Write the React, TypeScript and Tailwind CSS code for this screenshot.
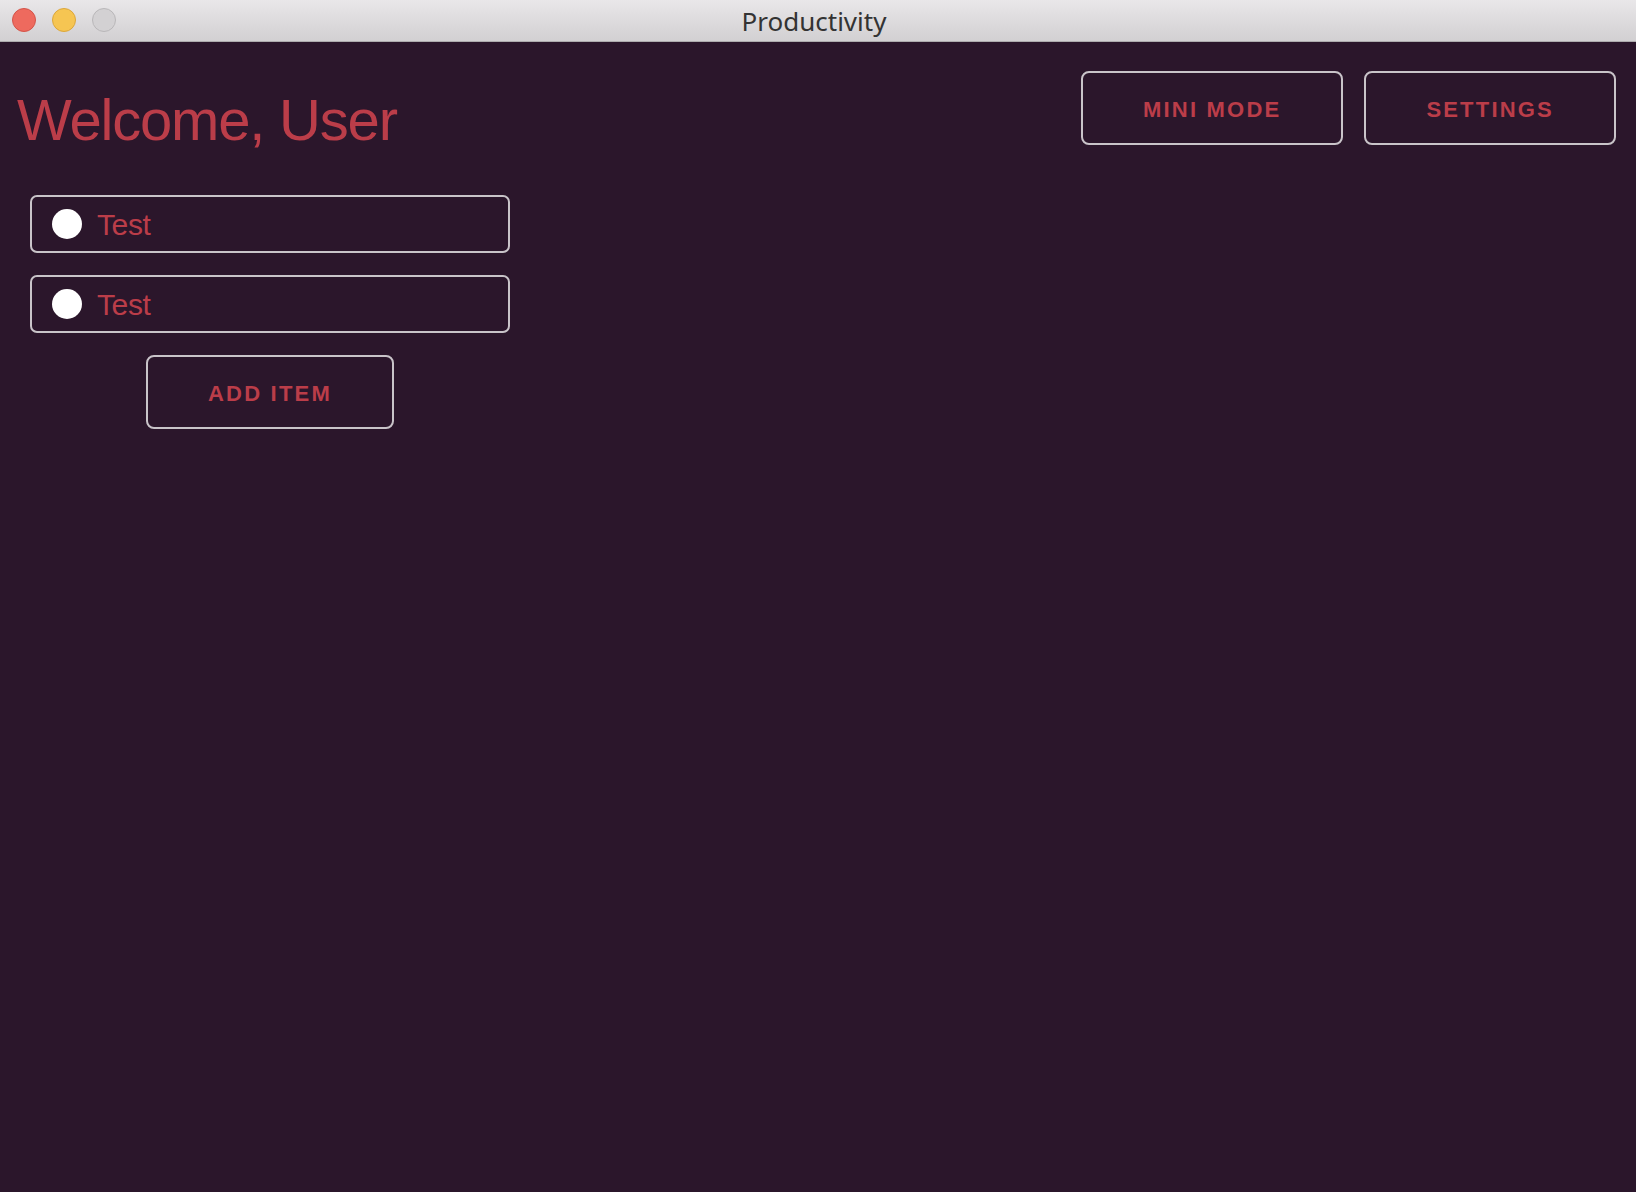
import React from "react";

function OutlineButton({ label }: { label: string }) {
  return (
    <button className="h-[74px] px-[60px] pt-[3px] rounded-[8px] border-2 border-[#c9c4c9] bg-transparent text-[#bb3d49] text-[22px] font-bold tracking-[2.2px] leading-none font-['Liberation_Sans',Arial,sans-serif] whitespace-nowrap">
      {label}
    </button>
  );
}

function Item({ text }: { text: string }) {
  return (
    <div className="w-[480px] h-[58px] rounded-[7px] border-2 border-[#c9c4c9] flex items-center pl-[20px] gap-[15px]">
      <div className="w-[30px] h-[30px] rounded-full bg-white shrink-0" />
      <span className="text-[30px] text-[#bb3d49] font-['Liberation_Sans',Arial,sans-serif] tracking-[-0.4px]">
        {text}
      </span>
    </div>
  );
}

export default function App() {
  return (
    <div className="w-[1636px] h-[1192px] flex flex-col bg-[#2b162b] overflow-hidden">
      <div className="relative h-[42px] shrink-0 bg-gradient-to-b from-[#e9e7e9] to-[#d2d0d2] border-b border-[#aeacae] flex items-center justify-center">
        <div className="absolute left-[12px] top-[8px] flex gap-[16px]">
          <div className="w-[24px] h-[24px] rounded-full bg-[#ee6a5e] border border-[#d45449]" />
          <div className="w-[24px] h-[24px] rounded-full bg-[#f6c552] border border-[#dca73b]" />
          <div className="w-[24px] h-[24px] rounded-full bg-[#d3d1d3] border border-[#b9b7b9]" />
        </div>
        <span className="text-[26px] text-[#333] font-['Noto_Sans',sans-serif] leading-none pt-[1px] -ml-[8px]">
          Productivity
        </span>
      </div>
      <div className="flex justify-between items-start pt-[29px] pl-[17px] pr-[20px]">
        <h1 className="mt-[20px] text-[58px] leading-none text-[#bb3d49] font-['Liberation_Sans',Arial,sans-serif] tracking-[-1.2px] font-normal">
          Welcome, User
        </h1>
        <div className="flex gap-[21px]">
          <OutlineButton label="MINI MODE" />
          <OutlineButton label="SETTINGS" />
        </div>
      </div>
      <div className="ml-[30px] mt-[46px] w-[480px] flex flex-col items-center gap-[22px]">
        <Item text="Test" />
        <Item text="Test" />
        <OutlineButton label="ADD ITEM" />
      </div>
    </div>
  );
}
